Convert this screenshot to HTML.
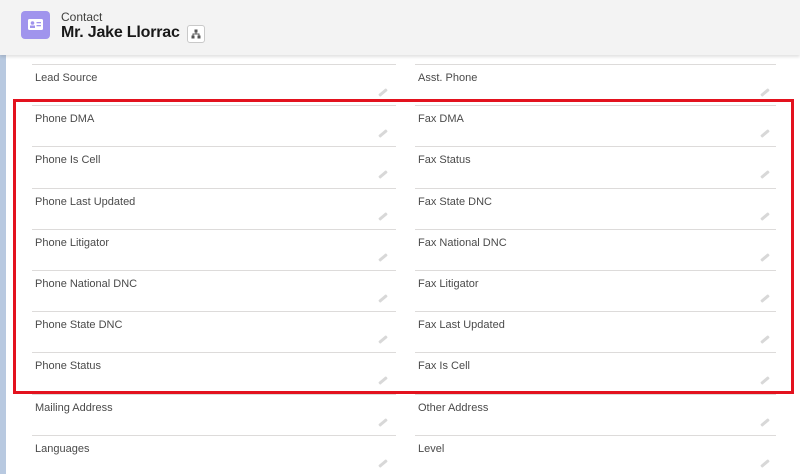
<!DOCTYPE html>
<html><head><style>
body{margin:0;width:800px;height:474px;overflow:hidden;background:#fff;font-family:"Liberation Sans",sans-serif;position:relative}
.strip{position:absolute;left:0;top:55px;width:6px;height:419px;background:#b8c9e0}
.hdr{position:absolute;left:0;top:0;width:800px;height:55px;background:#f3f3f3;box-shadow:0 2px 3px rgba(0,0,0,.12);z-index:2}
.icon{position:absolute;left:21px;top:11px;width:29px;height:28px;border-radius:4px;background:#a094ed}
.t1{position:absolute;left:61px;top:10px;font-size:12px;color:#3e3e3c}
.t2{position:absolute;left:61px;top:24px;font-size:16px;font-weight:bold;color:#181818;letter-spacing:-0.2px}
.hb{position:absolute;left:187px;top:25px;width:16px;height:16px;border:1px solid #c9c9c9;border-radius:3px;background:#fff}
.line{position:absolute;height:1px;background:#dddbda}
.lbl{position:absolute;font-size:11px;color:#4a4a4a}
.pen{position:absolute;width:10px;height:3px;background:#d8d8d8;transform:rotate(-40deg);border-radius:1px}
.red{position:absolute;left:13px;top:99px;width:775px;height:289px;border:3px solid #e3121e;z-index:3}
</style></head><body>
<div class="strip"></div>
<div class="hdr">
<div class="icon"><svg width="29" height="28" viewBox="0 0 29 28"><rect x="7" y="8" width="15" height="11" rx="1.5" fill="#fff"/><circle cx="11.5" cy="12" r="1.8" fill="#a094ed"/><rect x="9" y="14.5" width="5" height="2.5" fill="#a094ed"/><rect x="15.5" y="11" width="4.5" height="1.3" fill="#a094ed"/><rect x="15.5" y="14" width="4.5" height="1.3" fill="#a094ed"/></svg></div>
<div class="t1">Contact</div>
<div class="t2">Mr. Jake Llorrac</div>
<div class="hb"><svg width="16" height="16" viewBox="0 0 16 16"><rect x="6.5" y="3.5" width="3" height="3" fill="#555"/><rect x="3.5" y="9.5" width="3" height="3" fill="#555"/><rect x="9.5" y="9.5" width="3" height="3" fill="#555"/><path d="M8 6.5v1.5M5 9.5V8h6v1.5" stroke="#555" fill="none"/></svg></div>
</div>
<div id="rows"></div>
<div class="red"></div>
<script>
var L=["Lead Source","Phone DMA","Phone Is Cell","Phone Last Updated","Phone Litigator","Phone National DNC","Phone State DNC","Phone Status","Mailing Address","Languages"];
var R=["Asst. Phone","Fax DMA","Fax Status","Fax State DNC","Fax National DNC","Fax Litigator","Fax Last Updated","Fax Is Cell","Other Address","Level"];
var h="";
for(var i=0;i<10;i++){var y=64+i*41.2;
h+='<div class="line" style="left:32px;width:364px;top:'+y+'px"></div><div class="line" style="left:415px;width:361px;top:'+y+'px"></div>';
h+='<div class="lbl" style="left:35px;top:'+(y+8)+'px">'+L[i]+'</div><div class="lbl" style="left:418px;top:'+(y+8)+'px">'+R[i]+'</div>';
h+='<div class="pen" style="left:378px;top:'+(y+27)+'px"></div><div class="pen" style="left:760px;top:'+(y+27)+'px"></div>';}
document.getElementById("rows").innerHTML=h;
</script>
</body></html>
